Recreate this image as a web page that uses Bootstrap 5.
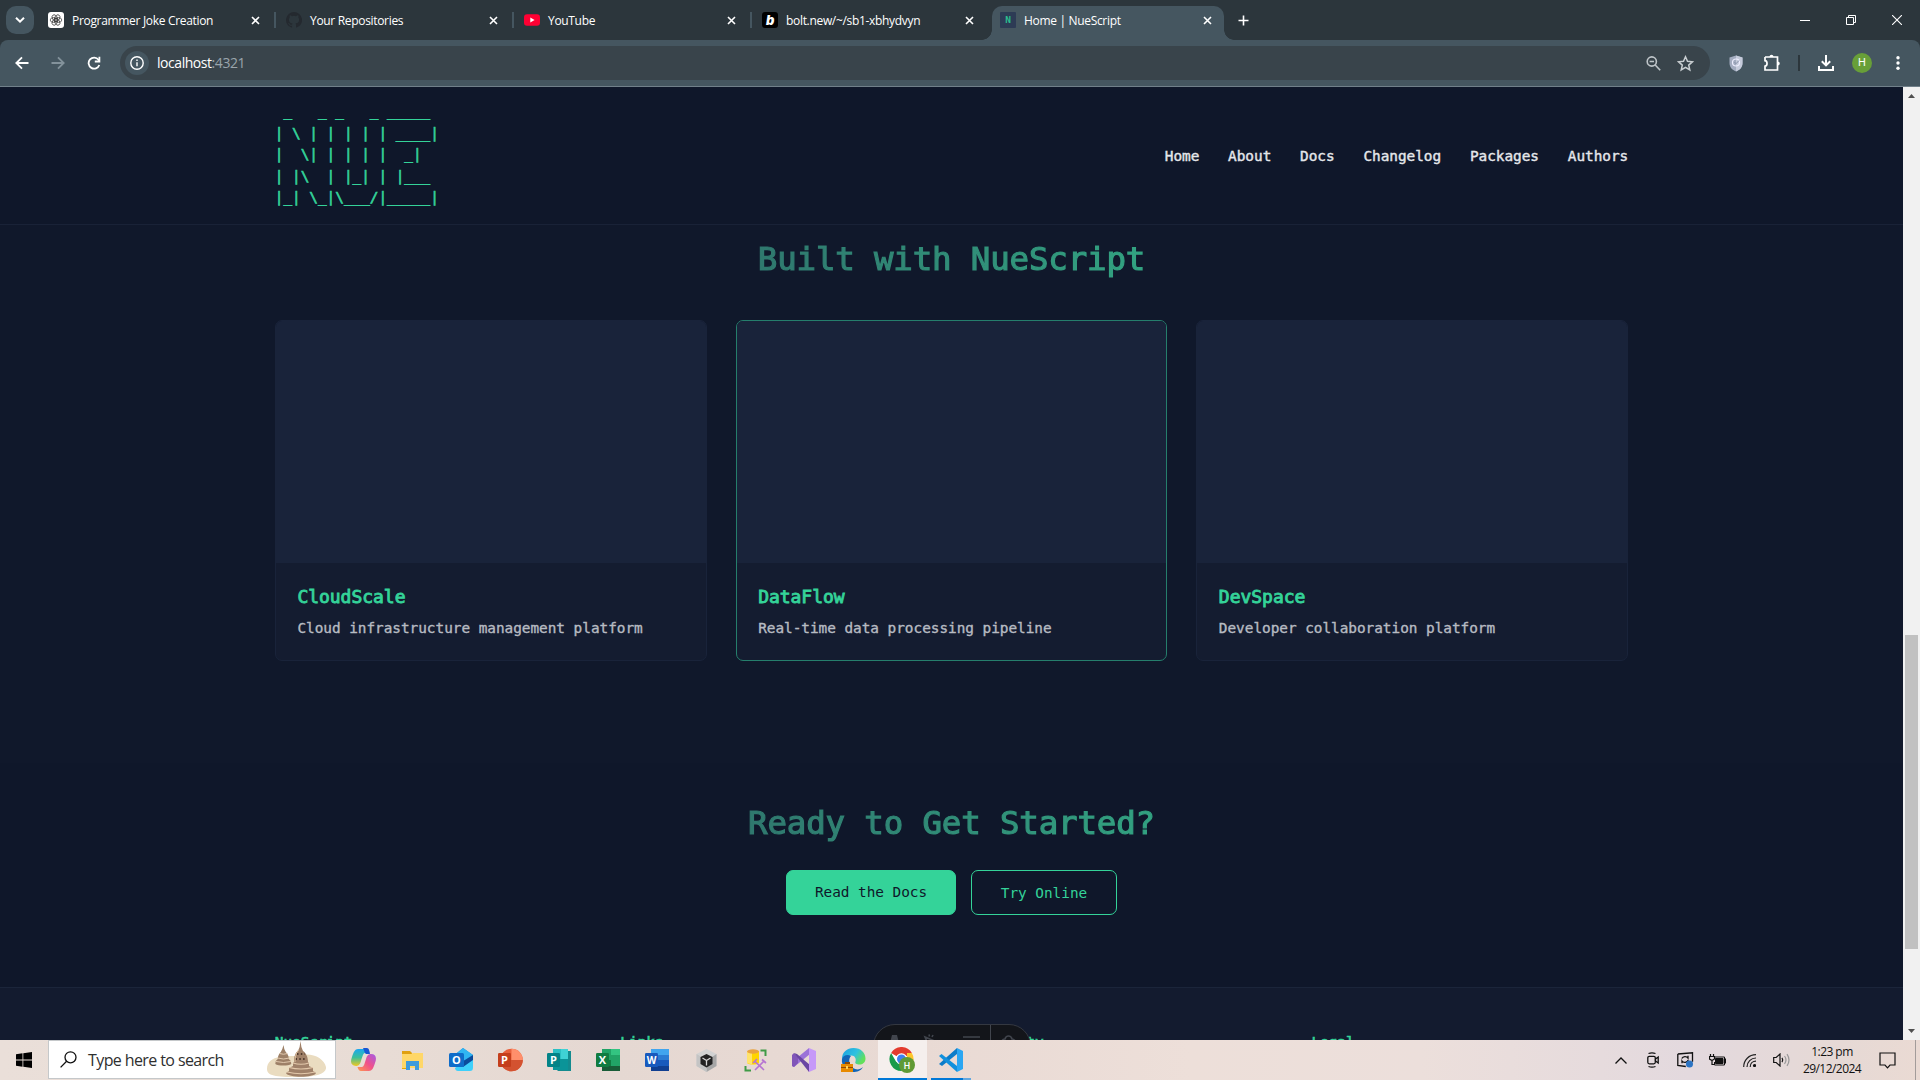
<!DOCTYPE html>
<html lang="en">
<head>
<meta charset="utf-8">
<title>Home | NueScript</title>
<link href="https://cdn.jsdelivr.net/npm/bootstrap@5.3.0/dist/css/bootstrap.min.css" rel="stylesheet">
<script src="https://cdn.jsdelivr.net/npm/bootstrap@5.3.0/dist/js/bootstrap.bundle.min.js"></script>
<style>
  body { width: 1920px; height: 1080px; overflow: hidden; background: #0f172a; font-family: "Open Sans", "Noto Sans", sans-serif; }
  svg { display: block; flex: none; }
  .mono { font-family: "DejaVu Sans Mono", monospace; letter-spacing: -.002em; }

  /* browser chrome */
  .tabstrip { height: 40px; background: #2c363c; padding-left: 6px; color: #fff; font-size: 12px; }
  .tabsearch { width: 28px; height: 28px; margin: 6px 4px 0 0; border-radius: 10px; background: #455660; }
  .btab { width: 238px; height: 34px; margin-top: 6px; padding: 0 12px 0 10px; position: relative; }
  .btab .ttl { margin-left: 8px; padding-top: 2px; letter-spacing: -.32px; white-space: nowrap; line-height: 28px; }
  .btab.sep::after { content: ""; position: absolute; right: 0; top: 6px; width: 2px; height: 16px; background: #455660; }
  .btab .inner { height: 28px; }
  .btab.on::before { content: ""; position: absolute; left: 2px; right: 4px; top: 0; bottom: 0; background: #455660; border-radius: 10px 10px 0 0; }
  .btab.on .inner { position: relative; }
  .flare { position: absolute; bottom: 0; width: 10px; height: 10px; }
  .flare.l { left: -8px; background: radial-gradient(circle at 0 0, transparent 9.5px, #455660 10px); }
  .flare.r { right: -6px; background: radial-gradient(circle at 100% 0, transparent 9.5px, #455660 10px); }
  .newtab { margin-left: 10px; }
  .winbtn { width: 46px; height: 40px; }
  .toolbar { height: 47px; background: #455660; border-bottom: 1px solid #71808a; padding: 0 4px; border-radius: 8px 8px 0 0; }
  .tool-wrap { background: #2c363c; }
  .ib { width: 36px; height: 36px; }
  .ib.nar { width: 32px; }
  .omni { height: 34px; margin: 0 8px; background: #39444b; border-radius: 17px; padding: 0 9px 0 5px; font-size: 14px; color: #fff; }
  .omni .info { width: 24px; height: 24px; background: #455660; }
  .omni .url { margin-left: 8px; letter-spacing: -.45px; line-height: 34px; }
  .omni .port { color: #9aa5ab; }
  .tdiv { width: 2px; height: 16px; margin: 0 8px; background: #2c363c; }
  .avatar { width: 20px; height: 20px; background: #689f38; font: 11px/20px Roboto, sans-serif; color: #fff; }

  /* page */
  .view { height: 953px; overflow: hidden; }
  .page { width: 1903px; height: 953px; overflow: hidden; background: #10182b; position: relative; }
  .wrap { width: 1353.4px; margin: 0 auto; }
  .site-head { height: 138px; background: #0f172a; border-bottom: 1px solid #192237; }
  .ascii { font-size: 14.4px; line-height: 21.6px; color: #34d399; overflow: visible; padding-bottom: 1px; -webkit-text-stroke: .6px; }
  .site-nav { gap: 28.8px; margin-top: 3px; }
  .site-nav a { font-size: 14.4px; color: #e5e7eb; text-decoration: none; -webkit-text-stroke: .4px; }
  .built { padding-top: 14px; }
  .grad { font-size: 32.4px; line-height: 40px; font-weight: 400; letter-spacing: -.004em; background: linear-gradient(90deg, #2f786e, #32a281); -webkit-background-clip: text; background-clip: text; color: transparent; -webkit-text-stroke: 1.2px transparent; }
  .cards { margin-top: 41px; gap: 28.8px; }
  .proj { height: 341px; border: 1px solid #19233a; border-radius: 7px; background: #141c30; overflow: hidden; }
  .proj.hot { border-color: #257e6c; }
  .shot { height: 242px; background: #19233a; }
  .info-box { padding: 21px 21.6px; }
  .info-box h3 { font-size: 18px; line-height: 25px; color: #34d399; margin: 0 0 8px; font-weight: 400; -webkit-text-stroke: .9px; }
  .info-box p { font-size: 14.4px; line-height: 22px; color: #b7bbc2; margin: 0; -webkit-text-stroke: .35px; }
  .cta { margin-top: 102px; padding-top: 40px; height: 224px; background: #0f172a; }
  .cta-btns { gap: 15px; margin-top: 27px; }
  .cta-btns a { height: 45px; border-radius: 7px; font-size: 14.4px; line-height: 43px; text-decoration: none; border: 1px solid #34d399; }
  .b-fill { width: 170px; background: #34d399; color: #0f172a; }
  .cta-btns .b-line { width: 146px; color: #34d399; line-height: 44px; }
  .site-foot { border-top: 1px solid #1b253a; background: #131b2f; height: 70px; padding-top: 43px; }
  .site-foot .cols { gap: 28.8px; }
  .site-foot h4 { font-size: 14.4px; line-height: 22px; font-weight: 400; color: #34d399; margin: 0; flex: 1 1 0; -webkit-text-stroke: .6px; }
  .devbar { position: absolute; left: 873px; top: 937px; width: 158px; height: 44px; border: 1px solid #343841; border-radius: 22px; background: #13151a; }
  .sbar { width: 17px; background: #f1f1f1; padding: 7px 0; }
  .thumb { width: 13px; height: 314px; background: #c1c1c1; margin-top: 537px; }

  /* taskbar */
  .task { height: 40px; background: linear-gradient(90deg, #eadfd9 0, #e8dcd5 20%, #e5d8d2 32%, #e9dad4 48%, #eddfd9 62%, #ecdfdb 74%, #e3d9de 88%, #e6d9d5 96%, #eadad3 100%); color: #1b1b1b; }
  .start { width: 48px; }
  .find { width: 288px; height: 39px; background: #fff; border: 1px solid #c5c8ca; padding-left: 11px; margin-right: 2.5px; margin-bottom: 1px; }
  .find span { font-size: 16px; letter-spacing: -.6px; margin-left: 11px; color: #2f2f2f; padding-top: 1px; }
  .find .art { margin-right: 9px; }
  .slot { width: 49px; height: 40px; position: relative; }
  .slot.cur { background: #f5efed; }
  .slot.cur::after { content: ""; position: absolute; left: 0; right: 0; bottom: 0; height: 2px; background: #0078d7; }
  .slot.run::after { content: ""; position: absolute; left: 4px; width: 40px; bottom: 0; height: 2px; background: linear-gradient(90deg, #0078d7 80%, #62a8e0 80%); }
  .tr { width: 32px; height: 40px; }
  .clock { width: 70px; font-size: 12px; line-height: 17.5px; letter-spacing: -.55px; color: #111; white-space: nowrap; }
  .note { width: 40px; margin-right: 8px; }
  .peek { width: 5px; height: 40px; border-left: 1px solid #a39c9a; }
</style>
</head>
<body>

<!-- tab strip -->
<div class="tabstrip d-flex">
  <div class="tabsearch d-flex align-items-center justify-content-center"><svg width="10" height="6" viewBox="0 0 10 6" fill="none" stroke="#fff" stroke-width="2"><path d="M1 .8 5 4.6 9 .8"/></svg></div>

  <div class="btab sep"><div class="inner d-flex align-items-center">
    <svg width="16" height="16" viewBox="0 0 16 16"><rect width="16" height="16" rx="3" fill="#fff"/><g fill="none" stroke="#333" stroke-width=".7"><ellipse cx="8" cy="5.800" rx="2.400" ry="3.600" transform="rotate(30 8 8)"/><ellipse cx="8" cy="5.800" rx="2.400" ry="3.600" transform="rotate(90 8 8)"/><ellipse cx="8" cy="5.800" rx="2.400" ry="3.600" transform="rotate(150 8 8)"/><ellipse cx="8" cy="5.800" rx="2.400" ry="3.600" transform="rotate(210 8 8)"/><ellipse cx="8" cy="5.800" rx="2.400" ry="3.600" transform="rotate(270 8 8)"/><ellipse cx="8" cy="5.800" rx="2.400" ry="3.600" transform="rotate(330 8 8)"/></g></svg>
    <span class="ttl">Programmer Joke Creation</span>
    <svg class="ms-auto me-1" width="9" height="9" viewBox="0 0 9 9" stroke="#fff" stroke-width="1.600"><path d="M1 1 8 8M8 1 1 8"/></svg></div></div>

  <div class="btab sep"><div class="inner d-flex align-items-center">
    <svg width="16" height="16" viewBox="0 0 16 16" fill="#24292f"><path d="M8 0a8 8 0 0 0-2.53 15.59c.4.07.55-.17.55-.38v-1.49c-2.01.37-2.53-.49-2.69-.94-.09-.23-.48-.94-.82-1.13-.28-.15-.68-.52-.01-.53.63-.01 1.08.58 1.23.82.72 1.21 1.87.87 2.33.66.07-.52.28-.87.51-1.07-1.78-.2-3.64-.89-3.64-3.95 0-.87.31-1.59.82-2.15-.08-.2-.36-1.02.08-2.12 0 0 .67-.21 2.2.82a7.5 7.5 0 0 1 4 0c1.53-1.04 2.2-.82 2.2-.82.44 1.1.16 1.92.08 2.12.51.56.82 1.27.82 2.15 0 3.07-1.87 3.75-3.65 3.95.29.25.54.73.54 1.48v2.2c0 .21.15.46.55.38A8 8 0 0 0 8 0"/></svg>
    <span class="ttl">Your Repositories</span>
    <svg class="ms-auto me-1" width="9" height="9" viewBox="0 0 9 9" stroke="#fff" stroke-width="1.600"><path d="M1 1 8 8M8 1 1 8"/></svg></div></div>

  <div class="btab sep"><div class="inner d-flex align-items-center">
    <svg width="16" height="16" viewBox="0 0 16 16"><rect y="2.300" width="16" height="11.400" rx="3" fill="#f03"/><path d="M6.300 5.600v4.800L10.600 8z" fill="#fff"/></svg>
    <span class="ttl">YouTube</span>
    <svg class="ms-auto me-1" width="9" height="9" viewBox="0 0 9 9" stroke="#fff" stroke-width="1.600"><path d="M1 1 8 8M8 1 1 8"/></svg></div></div>

  <div class="btab"><div class="inner d-flex align-items-center">
    <svg width="16" height="16" viewBox="0 0 16 16"><rect width="16" height="16" rx="3" fill="#000"/><text x="4" y="12.600" font-family="Inter,sans-serif" font-weight="900" font-style="italic" font-size="13" fill="#fff">b</text></svg>
    <span class="ttl">bolt.new/~/sb1-xbhydvyn</span>
    <svg class="ms-auto me-1" width="9" height="9" viewBox="0 0 9 9" stroke="#fff" stroke-width="1.600"><path d="M1 1 8 8M8 1 1 8"/></svg></div></div>

  <div class="btab on"><i class="flare l"></i><i class="flare r"></i><div class="inner d-flex align-items-center">
    <svg width="16" height="16" viewBox="0 0 16 16"><rect width="16" height="16" rx="1" fill="#2d3b55"/><text x="8" y="11" text-anchor="middle" font-family="DejaVu Sans Mono,monospace" font-weight="700" font-size="9.500" fill="#2bbd8e">N</text></svg>
    <span class="ttl">Home | NueScript</span>
    <svg class="ms-auto me-1" width="9" height="9" viewBox="0 0 9 9" stroke="#fff" stroke-width="1.600"><path d="M1 1 8 8M8 1 1 8"/></svg></div></div>

  <div class="newtab d-flex align-items-center"><svg width="11" height="11" viewBox="0 0 11 11" stroke="#fff" stroke-width="1.600"><path d="M5.500 .5v10M.5 5.500h10"/></svg></div>
  <div class="d-flex ms-auto">
    <div class="winbtn d-flex align-items-center justify-content-center"><svg width="10" height="10" viewBox="0 0 10 10" stroke="#fff"><path d="M0 5.500h10"/></svg></div>
    <div class="winbtn d-flex align-items-center justify-content-center"><svg width="10" height="10" viewBox="0 0 10 10" stroke="#fff" fill="none"><path d="M.5 2.500h7v7h-7zM2.500 2.500v-2h7v7h-2"/></svg></div>
    <div class="winbtn d-flex align-items-center justify-content-center"><svg width="10" height="10" viewBox="0 0 10 10" stroke="#fff" stroke-width="1.100"><path d="M0 0l10 10M10 0 0 10"/></svg></div>
  </div>
</div>

<!-- toolbar -->
<div class="tool-wrap"><div class="toolbar d-flex align-items-center">
  <div class="ib d-flex align-items-center justify-content-center"><svg width="14" height="14" viewBox="0 0 14 14" fill="none" stroke="#fff" stroke-width="1.800"><path d="M13.500 7H1.500M7 1.300 1.300 7 7 12.700"/></svg></div>
  <div class="ib d-flex align-items-center justify-content-center"><svg width="14" height="14" viewBox="0 0 14 14" fill="none" stroke="#83929b" stroke-width="1.800"><path d="M.5 7h12M7 1.300 12.700 7 7 12.700"/></svg></div>
  <div class="ib d-flex align-items-center justify-content-center"><svg width="14" height="14" viewBox="0 0 14 14" fill="none" stroke="#fff" stroke-width="1.800"><path d="M12.300 9A5.500 5.500 0 1 1 11.500 3.800L12.300 5"/><path d="M12.400.8v4.700H7.800"/></svg></div>
  <div class="omni d-flex align-items-center flex-grow-1">
    <div class="info rounded-circle d-flex align-items-center justify-content-center"><svg width="14" height="14" viewBox="0 0 14 14" fill="none" stroke="#fff" stroke-width="1.400"><circle cx="7" cy="7" r="6.200"/><path d="M7 6.300v4M7 3.600v1.500"/></svg></div>
    <span class="url">localhost<span class="port">:4321</span></span>
    <div class="ib nar ms-auto d-flex align-items-center justify-content-center"><svg width="15" height="15" viewBox="0 0 15 15" fill="none" stroke="#bfc5c9" stroke-width="1.600"><circle cx="5.800" cy="5.500" r="4.600"/><path d="M3.600 5.500H8M9.200 9l5 5.200"/></svg></div>
    <div class="ib nar d-flex align-items-center justify-content-center"><svg width="17" height="17" viewBox="0 0 17 17" fill="none" stroke="#c9ced1" stroke-width="1.500"><path d="m8.500 1.800 2 4.500 4.900.5-3.700 3.300 1.100 4.900-4.300-2.600L4.200 15l1.100-4.900L1.600 6.800l4.900-.5z"/></svg></div>
  </div>
  <div class="ib d-flex align-items-center justify-content-center"><svg width="14" height="17" viewBox="0 0 14 17"><path d="M7 .5 13.500 2.500V8c0 4-2.500 7-6.500 8.500C3 15 .5 12 .5 8V2.500z" fill="#a3acc0"/><path d="M7 .5 13.500 2.500V8c0 4-2.500 7-6.500 8.500z" fill="#c5cbdb"/><circle cx="7" cy="7.500" r="3.500" fill="none" stroke="#eef" stroke-width="1.200"/><path d="m5.500 7.200 1.500 1.500 3-3.200" stroke="#8790a8" fill="none"/></svg></div>
  <div class="ib d-flex align-items-center justify-content-center"><svg width="18" height="18" viewBox="0 0 18 18" fill="none" stroke="#fff" stroke-width="1.700"><path d="M2 3h4.500M2 2.900v3.800c2.700.3 2.700 5.200 0 5.500V16h12.500V3H2"/><path d="M6.500 3c0-3 4-3 4 0zM14.500 7.500c3 0 3 4 0 4z" fill="#fff" stroke="none"/></svg></div>
  <div class="tdiv"></div>
  <div class="ib d-flex align-items-center justify-content-center"><svg width="16" height="16" viewBox="0 0 16 16" fill="none" stroke="#fff" stroke-width="2"><path d="M8 0v10M3.800 6.200 8 10.400l4.200-4.200M1 11v4h14v-4"/></svg></div>
  <div class="ib d-flex align-items-center justify-content-center"><div class="avatar rounded-circle text-center">H</div></div>
  <div class="ib d-flex align-items-center justify-content-center"><svg width="4" height="14" viewBox="0 0 4 14" fill="#fff"><circle cx="2" cy="1.800" r="1.700"/><circle cx="2" cy="7" r="1.700"/><circle cx="2" cy="12.200" r="1.700"/></svg></div>
</div></div>

<!-- page -->
<div class="view d-flex">
  <div class="page mono">
    <header class="site-head">
      <div class="wrap h-100 d-flex align-items-center justify-content-between">
<pre class="ascii mono m-0"> _   _ _   _ _____ 
| \ | | | | | ____|
|  \| | | | |  _|  
| |\  | |_| | |___ 
|_| \_|\___/|_____|</pre>
        <nav class="site-nav d-flex"><a href="#">Home</a><a href="#">About</a><a href="#">Docs</a><a href="#">Changelog</a><a href="#">Packages</a><a href="#">Authors</a></nav>
      </div>
    </header>
    <section class="built wrap">
      <div class="text-center"><h2 class="grad d-inline-block m-0 align-top">Built with NueScript</h2></div>
      <div class="cards d-flex">
        <article class="proj flex-fill w-100"><div class="shot"></div><div class="info-box"><h3>CloudScale</h3><p>Cloud infrastructure management platform</p></div></article>
        <article class="proj hot flex-fill w-100"><div class="shot"></div><div class="info-box"><h3>DataFlow</h3><p>Real-time data processing pipeline</p></div></article>
        <article class="proj flex-fill w-100"><div class="shot"></div><div class="info-box"><h3>DevSpace</h3><p>Developer collaboration platform</p></div></article>
      </div>
    </section>
    <section class="cta text-center">
      <h2 class="grad d-inline-block m-0 align-top">Ready to Get Started?</h2>
      <div class="cta-btns d-flex justify-content-center"><a href="#" class="b-fill">Read the Docs</a><a href="#" class="b-line">Try Online</a></div>
    </section>
    <footer class="site-foot"><div class="wrap cols d-flex"><h4>NueScript</h4><h4>Links</h4><h4>Community</h4><h4>Legal</h4></div></footer>
    <div class="devbar"><svg width="156" height="42" viewBox="0 0 156 42" fill="none" stroke="#41454d" stroke-width="1.600"><path d="M116.500 0v42" stroke-width="1"/><path d="M14 26 18 10h5l4 16-6-4z" fill="#41454d" stroke="none"/><path d="M51 12l12 5-5 2-2 5zM55 9.500l.5 2M59 10l-1 2"/><path d="M89 12h17M92 19h11"/><path d="M128 17c0-2 1-3 3-3 1-4 6-4 7 0 2 0 4 2 3 4M131 24a4 4 0 1 1 7 0"/></svg></div>
  </div>
  <div class="sbar d-flex flex-column align-items-center">
    <svg width="7" height="4" viewBox="0 0 7 4" fill="#505050"><path d="M0 4 3.500 0 7 4z"/></svg>
    <div class="thumb"></div>
    <svg class="mt-auto" width="7" height="4" viewBox="0 0 7 4" fill="#505050"><path d="M0 0h7L3.500 4z"/></svg>
  </div>
</div>

<!-- taskbar -->
<div class="task d-flex align-items-center">
  <div class="start d-flex justify-content-center"><svg width="16" height="16" viewBox="0 0 16 16"><path d="M0 2.300 6.500 1.300v6.200H0zM7.300 1.200 16 0v7.500H7.300zM0 8.400h6.500v6.300L0 13.700zM7.300 8.400H16V16l-8.700-1.200z"/></svg></div>
  <div class="find d-flex align-items-center">
    <svg width="17" height="17" viewBox="0 0 17 17" fill="none" stroke="#111" stroke-width="1.300"><circle cx="10.500" cy="6.300" r="5.500"/><path d="M6.600 10.200.6 16.400"/></svg>
    <span>Type here to search</span>
    <svg class="art ms-auto" width="60" height="37" viewBox="0 0 60 37">
      <path d="M1 28c0-7 5-11 13-12 10-2 16 0 22-2 12-2 22 4 24 12 1 7-11 10-26 10C14 36 1 36 1 28z" fill="#eadcc0"/>
      <path d="M17.500 4l.8 4 1.500 3c2 2 3 4 3 7l2 2 .5 3c-3 2-13 2-16 0l.5-3 2-2c0-3 1-5 3-7l1.500-3z" fill="#9d8067"/>
      <path d="M13.500 12.500q4 1.500 8 0M11.500 17q6 2 12 0M10 20.500q7.500 2 15 0" stroke="#e6cfb4" fill="none" stroke-width=".9"/>
      <path d="M34.500 0l.9 6 1.600 4c3 2 5 6 5 11l1 1v3l4 2v3l3 2c-2 5-28 5-30 0l3-2v-3l4-2v-3l1-1c0-5 1-9 4-11l1.600-4z" fill="#a08169"/>
      <path d="M27 22q8 2.500 16 0M23 26.500q12 3 24 0M21 31q14 3.500 28 0" stroke="#e3c9ab" stroke-width="1.200" fill="none"/>
      <path d="M31 13h8M29.500 18h11" stroke="#4f3a2e" stroke-width="2" stroke-dasharray="1.500 2.300"/><path d="M32.500 9c-3 4-3.500 8-3.500 12" stroke="#d9bd9d" fill="none"/>
    </svg>
  </div>

  <div class="slot d-flex align-items-center justify-content-center"><svg width="25" height="24" viewBox="0 0 25 24"><defs><linearGradient id="ca" x1="0" y1="0" x2="0" y2="1"><stop offset="0" stop-color="#1aa7f0"/><stop offset=".5" stop-color="#3cbf9a"/><stop offset="1" stop-color="#f3c81e"/></linearGradient><linearGradient id="cb" x1="1" y1="0" x2="0" y2="1"><stop offset="0" stop-color="#a35be8"/><stop offset=".5" stop-color="#f0518a"/><stop offset="1" stop-color="#ff9a4d"/></linearGradient></defs><path d="M7 1h8c2 0 3 2 3.500 4H14c-2 0-3 5-4 8-1 4-3 5-5 5-5 0-6-4-4-9C2.500 4 4 1 7 1z" fill="url(#ca)"/><path d="M12 0h4c2 0 2.500 3 3 6h-4c-1 0-2-4-3-6z" fill="#1857d4"/><path d="M18 23h-8c-2 0-3-2-3.500-4H11c2 0 3-5 4-8 1-4 3-5 5-5 5 0 6 4 4 9-1.500 5-3 8-6 8z" fill="url(#cb)"/></svg></div>
  <div class="slot d-flex align-items-center justify-content-center"><svg width="23" height="20" viewBox="0 0 23 20"><path d="M1 1h8l2 2v4H1z" fill="#e0a010"/><path d="M1 4h9l2-1h10v15H1z" fill="#ffd768"/><path d="M5 11h13v9h-4v-4H9v4H5z" fill="#3d9bdd"/><path d="M1 18h4v1H1z" fill="#e9a800"/></svg></div>
  <div class="slot d-flex align-items-center justify-content-center"><svg width="25" height="24" viewBox="0 0 25 24"><path d="M4 8 14 0l10 7v10l-10 4z" fill="#1c8de0"/><path d="M14 0l10 7-9 6-9-6z" fill="#30b5f2"/><path d="M24 7v12c0 3-1 4-3 4H9c-2 0-3-2-3-3z" fill="#3fd0fb"/><path d="M24 7v5l-10 7-3-4z" fill="#0c4b9c"/><rect y="5" width="15" height="14" rx="1.500" fill="#0f6cc9"/><text x="7.500" y="16" text-anchor="middle" font-family="Open Sans" font-weight="700" font-size="11" fill="#fff">O</text></svg></div>
  <div class="slot d-flex align-items-center justify-content-center"><svg width="25" height="24" viewBox="0 0 25 24"><circle cx="13.500" cy="12" r="11.300" fill="#e8603c"/><path d="M13.500.7A11.300 11.300 0 0 1 24.800 12H13.500z" fill="#ff8f6b"/><path d="M2.200 12h22.600a11.300 11.300 0 0 1-22.600 0z" fill="#d35230"/><rect y="5" width="13" height="14" rx="1.200" fill="#c43e1c"/><text x="6.500" y="16" text-anchor="middle" font-family="Open Sans" font-weight="700" font-size="11" fill="#fff">P</text></svg></div>
  <div class="slot d-flex align-items-center justify-content-center"><svg width="25" height="24" viewBox="0 0 25 24"><path d="M6 1h15v10H6z" fill="#2bc0c4"/><path d="M18 3h6v20H10l8-8z" fill="#138b8f"/><path d="M6 11h15v11H6z" fill="#0b9498"/><path d="M14 1h7v10h-7z" fill="#3fd2d5"/><rect y="5" width="13" height="14" rx="1.200" fill="#038387"/><text x="6.500" y="16" text-anchor="middle" font-family="Open Sans" font-weight="700" font-size="11" fill="#fff">P</text></svg></div>
  <div class="slot d-flex align-items-center justify-content-center"><svg width="25" height="24" viewBox="0 0 25 24"><path d="M6 1h18v22H6z" fill="#21a366"/><path d="M15 1h9v6h-9z" fill="#33c481"/><path d="M6 12h9v6H6z" fill="#107c41"/><path d="M6 18h18v5H6z" fill="#185c37"/><rect y="5" width="13" height="14" rx="1.200" fill="#107c41"/><text x="6.500" y="16" text-anchor="middle" font-family="Open Sans" font-weight="700" font-size="11" fill="#fff">X</text></svg></div>
  <div class="slot d-flex align-items-center justify-content-center"><svg width="25" height="24" viewBox="0 0 25 24"><path d="M6 1h18v6H6z" fill="#41a5ee"/><path d="M6 7h18v5H6z" fill="#2b7cd3"/><path d="M6 12h18v6H6z" fill="#185abd"/><path d="M6 18h18v5H6z" fill="#103f91"/><rect y="5" width="13" height="14" rx="1.200" fill="#185abd"/><text x="6.500" y="15.500" text-anchor="middle" font-family="Open Sans" font-weight="700" font-size="10" fill="#fff">W</text></svg></div>
  <div class="slot d-flex align-items-center justify-content-center"><svg width="21" height="23" viewBox="0 0 21 23"><path d="M10.500 0 20.500 5v12l-10 6-10-6V5z" fill="#d2d2d2"/><path d="M10.500 12v11l10-6V5z" fill="#a6a6a6"/><path d="M.5 5l10 6v12l-10-6z" fill="#c4c4c4"/><path d="M10.500 5 16.500 8v7l-6 3.500-6-3.500V8z" fill="#222"/><path d="M10.500 16.500v-5L6.500 9M10.500 11.500l4-2.500" stroke="#d6d6d6" stroke-width="1.300" fill="none"/></svg></div>
  <div class="slot d-flex align-items-center justify-content-center"><svg width="23" height="23" viewBox="0 0 23 23"><path d="M3 2v12c3 2 9 2 12 0V2z" fill="#ffd400"/><path d="M3 2v12l5 1.500V2z" fill="#ffe36a"/><ellipse cx="9" cy="2.500" rx="6" ry="2.200" fill="#e9a340"/><path d="M16.500 1.500h5V7M1.500 17v4.500H7" stroke="#3f9b46" stroke-width="2" fill="none"/><path d="M10.500 12l9.500 9M20 12l-9 9M9 14l4-4M18 10.500l4 3.500" stroke="#b674d2" stroke-width="1.700"/></svg></div>
  <div class="slot d-flex align-items-center justify-content-center"><svg width="25" height="24" viewBox="0 0 25 24"><path d="M17 0 0 14v4l2 1L18 6z" fill="#9b72d8"/><path d="M0 7v11l2 1 4-4V9L2 5z" fill="#8055b8"/><path d="M2 5 17 24l1-7L5 6z" fill="#6a45a3"/><path d="M17 0l7 3v18l-7 3z" fill="#c698f8"/></svg></div>
  <div class="slot d-flex align-items-center justify-content-center"><svg width="25" height="24" viewBox="0 0 25 24"><defs><linearGradient id="ed" x1="0" y1="0" x2="1" y2=".5"><stop offset="0" stop-color="#1ba0e2"/><stop offset=".6" stop-color="#2fc2df"/><stop offset="1" stop-color="#62e05a"/></linearGradient></defs><path d="M1 11C1 4 6 0 12.500 0 20 0 24.500 5 24.500 10.500c0 4-3 6-6 6-3 0-5-1-4-3 1-3-1-6-4-6-5 0-8 3-9.500 3.500z" fill="url(#ed)"/><path d="M1 11c1-4 6-5 9-3-3 3-2 9 2 12 3 2 7 2 10-1-2 4-6 5-10 5-7-1-12-7-11-13z" fill="#1266b8"/><path d="M0 16h12v8H0z" fill="#e88a00"/><path d="M0 19h12v1H0zM4 14h5v2H4z" fill="#8c4a08"/><path d="M5 18h2v3H5z" fill="#ffd35b"/></svg></div>
  <div class="slot cur d-flex align-items-center justify-content-center"><svg width="26" height="26" viewBox="0 0 26 26"><circle cx="12.500" cy="12" r="12" fill="#fff"/><path d="M12.500 12 2.100 6A12 12 0 0 1 22.900 6z" fill="#e33b2e"/><path d="M2.100 6A12 12 0 0 0 12.500 24l5.200-9-5.200-3-5.200 3z" fill="#1a9a4b"/><path d="M22.900 6A12 12 0 0 1 12.500 24l5.200-9L18 6z" fill="#fdc52c"/><circle cx="12.500" cy="12" r="5.800" fill="#fff"/><circle cx="12.500" cy="12" r="4.500" fill="#3f7ff0"/><circle cx="18" cy="18" r="8" fill="#5f9a35"/><text x="18" y="21.500" text-anchor="middle" font-family="Roboto" font-size="9" font-weight="500" fill="#fff">H</text></svg></div>
  <div class="slot run d-flex align-items-center justify-content-center"><svg width="25" height="24" viewBox="0 0 25 24"><path d="M0 16 18 0v6L3 18z" fill="#0b7cc9"/><path d="M0 8 2.500 6 18 18v6z" fill="#1190dd"/><path d="M18 0l6 3v18l-6 3z" fill="#2aa6f2"/></svg></div>

  <div class="d-flex align-items-center ms-auto">
    <div class="tr d-flex align-items-center justify-content-center"><svg width="12" height="7" viewBox="0 0 12 7" fill="none" stroke="#111" stroke-width="1.300"><path d="M.5 6.500 6 1l5.500 5.500"/></svg></div>
    <div class="tr d-flex align-items-center justify-content-center"><svg width="12" height="16" viewBox="0 0 12 16" fill="none" stroke="#111" stroke-width="1.300"><rect x=".8" y="4.300" width="7.500" height="7.500" rx="1.500"/><path d="m8.500 7 2.700-2v6L8.500 9zM1.500 1.500Q5 .2 8.500 1.500M1.500 14.500Q5 15.800 8.500 14.500"/></svg></div>
    <div class="tr d-flex align-items-center justify-content-center"><svg width="17" height="16" viewBox="0 0 17 16" fill="none" stroke="#111" stroke-width="1.300"><path d="M.8 2 15.500.8v9M.8 2v11.500l8 1"/><path d="M4.800 6.500C6 4 9.500 4 11 6V3.800M11.300 8c-1 3-5 3-6.300 1v2.300"/><circle cx="12.500" cy="12" r="3.500" fill="#2b74c4" stroke="none"/></svg></div>
    <div class="tr d-flex align-items-center justify-content-center"><svg width="17" height="12" viewBox="0 0 17 12" fill="none" stroke="#111"><path d="M5 3h10.500v8H5.500V8"/><path d="M6.500 4.500h7.500v5H6.500zM15.500 5h1.500v4h-1.500z" fill="#111"/><path d="M1.500 0v2M4.500 0v2M.5 2.500h5V5L3 6.500.5 5zM3 6.500v4h2" stroke-width="1.200"/></svg></div>
    <div class="tr d-flex align-items-center justify-content-center"><svg width="13" height="13" viewBox="0 0 13 13" fill="none" stroke="#222" stroke-width="1.200"><path d="M.7 13C.7 6 6 .7 13 .7M4 13c0-5 4-9 9-9M7.200 13c0-3.500 2.500-5.800 5.800-5.800"/><circle cx="11.500" cy="11.500" r="1.600" fill="#111" stroke="none"/></svg></div>
    <div class="tr d-flex align-items-center justify-content-center"><svg width="17" height="14" viewBox="0 0 17 14" fill="none" stroke="#111" stroke-width="1.200"><path d="M.7 4.500h2.500L7 1v12L3.200 9.500H.7z"/><path d="M9 4.800q1.500 2.200 0 4.400"/><path d="M11.500 3q3 4 0 8M14 1.200q4 5.800 0 11.600" stroke="#999"/></svg></div>
    <div class="clock text-center">1:23 pm<br>29/12/2024</div>
    <div class="note d-flex justify-content-center"><svg width="17" height="17" viewBox="0 0 17 17" fill="none" stroke="#111" stroke-width="1.200"><path d="M1 1h15v12h-5l-2.500 2.800L6 13H1z"/></svg></div>
    <div class="peek"></div>
  </div>
</div>
</body>
</html>
